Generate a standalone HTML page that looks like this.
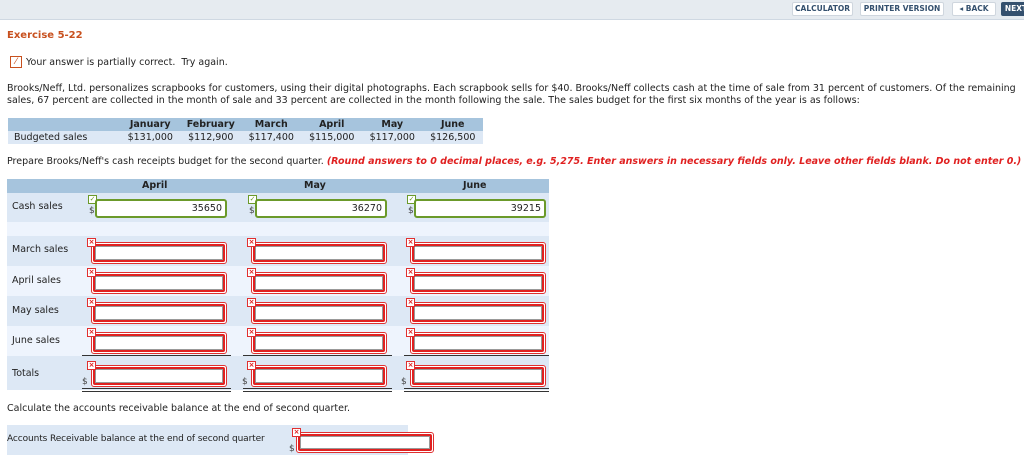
<!DOCTYPE html><html><head><style>
*{margin:0;padding:0;box-sizing:border-box}
body{width:1024px;height:464px;background:#fff;font-family:"DejaVu Sans","Liberation Sans",sans-serif;font-size:9.5px;color:#222;position:relative;overflow:hidden}
.a{position:absolute;white-space:nowrap}
.btn{position:absolute;top:2px;height:14px;border:1px solid #cfd6de;background:#fff;font-size:7.5px;font-weight:bold;color:#34506e;text-align:center;line-height:12px;border-radius:2px}
.in{position:absolute;border:1px solid #e03030;border-radius:3px;background:#fff}
.in::after{content:"";position:absolute;left:1px;right:1px;top:1px;bottom:1px;border:2px solid #e02020;border-radius:2px;box-shadow:inset 0 0 0 1px #999}
.ok{position:absolute;border:2px solid #6b9a2a;border-radius:3px;background:#fff;font-size:9.5px;text-align:right;padding-right:3px;line-height:15px}
.x{position:absolute;width:9px;height:9px;border:1px solid #e03030;background:#fff;color:#e02020;font-size:7px;line-height:7px;text-align:center;font-weight:bold;z-index:2}
.c{position:absolute;width:9px;height:9px;border:1px solid #6b9a2a;background:#fff;color:#6b9a2a;font-size:7px;line-height:7px;text-align:center}
.row{position:absolute;left:7px;width:542px}
.d{position:absolute;font-size:9px;color:#444}
.ul{position:absolute;height:1px;background:#333}
.dl{position:absolute;height:4px;border-top:1px solid #333;border-bottom:1px solid #333}
</style></head><body>
<div class="a" style="left:0;top:0;width:1024px;height:20px;background:#e6ebf0;border-bottom:1px solid #cfd8e2"></div>
<div class="btn" style="left:792px;width:61px">CALCULATOR</div>
<div class="btn" style="left:860px;width:84px">PRINTER VERSION</div>
<div class="btn" style="left:952px;width:44px">◂ BACK</div>
<div class="btn" style="left:1001px;width:30px;background:#34506e;color:#fff;border-color:#34506e">NEXT</div>
<div class="a" style="left:7px;top:30px;color:#c8501e;font-weight:bold;font-size:10px">Exercise 5-22</div>
<div class="a" style="left:10px;top:56px;width:12px;height:12px;border:1px solid #c8501e;color:#c8501e;font-size:9px;line-height:10px;text-align:center">⁄</div>
<div class="a" style="left:26px;top:57px">Your answer is partially correct.&nbsp; Try again.</div>
<div class="a" style="left:7px;top:83px;line-height:12px">Brooks/Neff, Ltd. personalizes scrapbooks for customers, using their digital photographs. Each scrapbook sells for $40. Brooks/Neff collects cash at the time of sale from 31 percent of customers. Of the remaining<br>sales, 67 percent are collected in the month of sale and 33 percent are collected in the month following the sale. The sales budget for the first six months of the year is as follows:</div>
<div class="a" style="left:8px;top:118px;width:475px;height:13px;background:#a6c4dd"></div>
<div class="a" style="left:8px;top:131px;width:475px;height:13px;background:#dde8f5"></div>
<div class="a" style="left:14px;top:132px">Budgeted sales</div>
<div class="a" style="left:120px;top:119px;font-weight:bold;width:363px;display:flex"><span style="width:61px;text-align:center">January</span><span style="width:61px;text-align:center">February</span><span style="width:61px;text-align:center">March</span><span style="width:61px;text-align:center">April</span><span style="width:61px;text-align:center">May</span><span style="width:61px;text-align:center">June</span></div>
<div class="a" style="left:120px;top:132px;width:363px;display:flex"><span style="width:61px;text-align:center">$131,000</span><span style="width:61px;text-align:center">$112,900</span><span style="width:61px;text-align:center">$117,400</span><span style="width:61px;text-align:center">$115,000</span><span style="width:61px;text-align:center">$117,000</span><span style="width:61px;text-align:center">$126,500</span></div>
<div class="a" style="left:7px;top:156px">Prepare Brooks/Neff's cash receipts budget for the second quarter. <b style="color:#e02020;font-style:italic">(Round answers to 0 decimal places, e.g. 5,275. Enter answers in necessary fields only. Leave other fields blank. Do not enter 0.)</b></div>
<div class="row" style="top:179px;height:14px;background:#a6c4dd;font-weight:bold"><span class="a" style="left:135px;top:1px">April</span><span class="a" style="left:297px;top:1px">May</span><span class="a" style="left:456px;top:1px">June</span></div>
<div class="row" style="top:193px;height:29px;background:#dde8f5"></div>
<div class="row" style="top:222px;height:14px;background:#eef4fd"></div>
<div class="row" style="top:236px;height:30px;background:#dde8f5"></div>
<div class="row" style="top:266px;height:30px;background:#eef4fd"></div>
<div class="row" style="top:296px;height:30px;background:#dde8f5"></div>
<div class="row" style="top:326px;height:30px;background:#eef4fd"></div>
<div class="row" style="top:356px;height:34px;background:#dde8f5"></div>
<div class="a" style="left:12px;top:201px">Cash sales</div>
<div class="a" style="left:12px;top:244px">March sales</div>
<div class="a" style="left:12px;top:275px">April sales</div>
<div class="a" style="left:12px;top:305px">May sales</div>
<div class="a" style="left:12px;top:335px">June sales</div>
<div class="a" style="left:12px;top:368px">Totals</div>
<div class="c" style="left:88px;top:195px">✓</div><div class="d" style="left:89px;top:206px">$</div><div class="ok" style="left:95px;top:199px;width:132px;height:19px">35650</div>
<div class="c" style="left:248px;top:195px">✓</div><div class="d" style="left:249px;top:206px">$</div><div class="ok" style="left:255px;top:199px;width:132px;height:19px">36270</div>
<div class="c" style="left:407px;top:195px">✓</div><div class="d" style="left:408px;top:206px">$</div><div class="ok" style="left:414px;top:199px;width:132px;height:19px">39215</div>
<div class="in" style="left:91px;top:242px;width:136px;height:22px"></div><div class="x" style="left:87px;top:238px">×</div>
<div class="in" style="left:251px;top:242px;width:136px;height:22px"></div><div class="x" style="left:247px;top:238px">×</div>
<div class="in" style="left:410px;top:242px;width:136px;height:22px"></div><div class="x" style="left:406px;top:238px">×</div>
<div class="in" style="left:91px;top:272px;width:136px;height:22px"></div><div class="x" style="left:87px;top:268px">×</div>
<div class="in" style="left:251px;top:272px;width:136px;height:22px"></div><div class="x" style="left:247px;top:268px">×</div>
<div class="in" style="left:410px;top:272px;width:136px;height:22px"></div><div class="x" style="left:406px;top:268px">×</div>
<div class="in" style="left:91px;top:302px;width:136px;height:22px"></div><div class="x" style="left:87px;top:298px">×</div>
<div class="in" style="left:251px;top:302px;width:136px;height:22px"></div><div class="x" style="left:247px;top:298px">×</div>
<div class="in" style="left:410px;top:302px;width:136px;height:22px"></div><div class="x" style="left:406px;top:298px">×</div>
<div class="in" style="left:91px;top:332px;width:136px;height:22px"></div><div class="x" style="left:87px;top:328px">×</div>
<div class="in" style="left:251px;top:332px;width:136px;height:22px"></div><div class="x" style="left:247px;top:328px">×</div>
<div class="in" style="left:410px;top:332px;width:136px;height:22px"></div><div class="x" style="left:406px;top:328px">×</div>
<div class="ul" style="left:82px;top:355px;width:149px"></div><div class="ul" style="left:243px;top:355px;width:149px"></div><div class="ul" style="left:404px;top:355px;width:145px"></div>
<div class="in" style="left:91px;top:365px;width:136px;height:22px"></div><div class="x" style="left:87px;top:361px">×</div><div class="d" style="left:82px;top:377px">$</div>
<div class="in" style="left:251px;top:365px;width:136px;height:22px"></div><div class="x" style="left:247px;top:361px">×</div><div class="d" style="left:242px;top:377px">$</div>
<div class="in" style="left:410px;top:365px;width:136px;height:22px"></div><div class="x" style="left:406px;top:361px">×</div><div class="d" style="left:401px;top:377px">$</div>
<div class="dl" style="left:82px;top:388px;width:149px"></div><div class="dl" style="left:243px;top:388px;width:149px"></div><div class="dl" style="left:404px;top:388px;width:145px"></div>
<div class="a" style="left:7px;top:403px">Calculate the accounts receivable balance at the end of second quarter.</div>
<div class="a" style="left:7px;top:425px;width:401px;height:30px;background:#dde8f5"></div>
<div class="a" style="left:7px;top:434px;font-size:9px;letter-spacing:-0.1px">Accounts Receivable balance at the end of second quarter</div>
<div class="in" style="left:296px;top:432px;width:138px;height:21px"></div><div class="x" style="left:292px;top:428px">×</div><div class="d" style="left:289px;top:444px">$</div>
</body></html>
